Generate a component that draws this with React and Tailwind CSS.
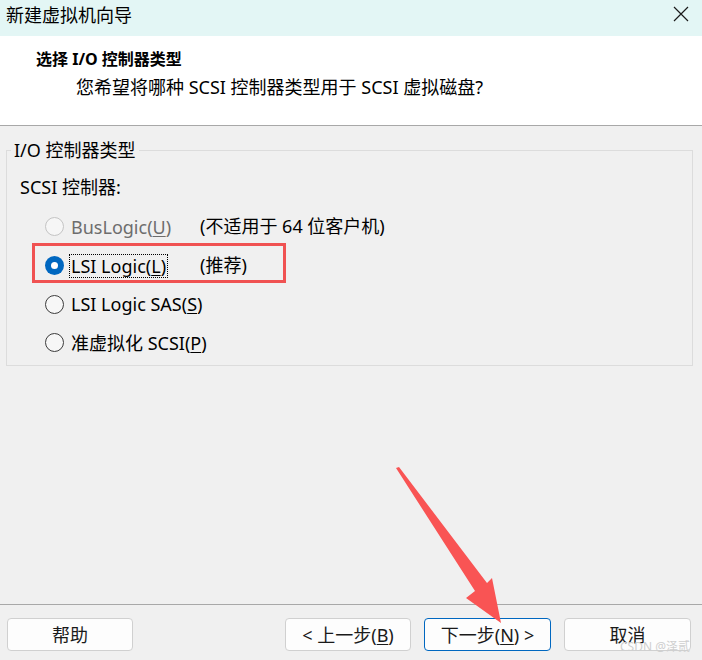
const font = { fontFamily: '"Noto Sans", "Noto Sans CJK SC", sans-serif' };

function Radio({ checked, disabled }) {
  if (checked) {
    return (
      <span className="w-[19px] h-[19px] rounded-full bg-[#0067c0] flex items-center justify-center shrink-0">
        <span className="w-[7px] h-[7px] rounded-full bg-white" />
      </span>
    );
  }
  return (
    <span
      className={
        "w-[19px] h-[19px] rounded-full border shrink-0 " +
        (disabled ? "border-[#c4c4c4] bg-[#f6f6f6]" : "border-[#3c3c3c] bg-[#f7f7f7]")
      }
    />
  );
}

function Option({ checked, disabled, label, hotkey, suffix, note, focused, h }) {
  return (
    <div className={"flex items-center whitespace-nowrap " + h}>
      <div className="w-[193px] shrink-0 flex items-center pl-[38px]">
        <Radio checked={checked} disabled={disabled} />
        <span
          className={
            "ml-[5px] px-[1px] leading-[22px] whitespace-nowrap " +
            (disabled ? "text-[#6d6d6d] " : "text-black ") +
            (focused ? "border border-dotted border-black" : "border border-transparent")
          }
        >
          {label}(<span className="underline underline-offset-2">{hotkey}</span>){suffix}
        </span>
      </div>
      {note && <span className="text-black">{note}</span>}
    </div>
  );
}

export default function App() {
  return (
    <div
      className="relative w-[702px] h-[660px] bg-[#f0f0f0] flex flex-col overflow-hidden text-[18px] text-[#1a1a1a]"
      style={font}
    >
      {/* title bar */}
      <div className="h-[36px] bg-[#e3f6f5] flex items-start justify-between pl-[6px] pt-[3px] shrink-0">
        <span className="leading-[24px] text-black">新建虚拟机向导</span>
        <svg className="mr-[13px] mt-[3px]" width="16" height="16" viewBox="0 0 16 16">
          <path d="M1 1 L15 15 M15 1 L1 15" stroke="#1a1a1a" strokeWidth="1.2" fill="none" />
        </svg>
      </div>

      {/* header */}
      <div className="h-[90px] bg-white border-b border-[#a8a8a8] shrink-0 pt-[11px]">
        <div className="pl-[36px] leading-[24px] text-[16px] font-bold text-black">选择 I/O 控制器类型</div>
        <div className="pl-[76px] mt-[4px] leading-[24px] text-black">
          您希望将哪种 SCSI 控制器类型用于 SCSI 虚拟磁盘?
        </div>
      </div>

      {/* body */}
      <div className="flex-1">
        <fieldset className="mt-[12px] ml-[6px] w-[687px] border border-[#dcdcdc] pb-[3px]">
          <legend className="ml-[4px] px-[3px] leading-[24px] text-black">I/O 控制器类型</legend>
          <div className="pl-[13px] mt-[13px] leading-[24px] text-black">SCSI 控制器:</div>
          <div className="mt-[8px] flex flex-col">
            <Option h="h-[39px]" disabled label="BusLogic" hotkey="U" note="(不适用于 64 位客户机)" />
            <Option h="h-[39px]" checked focused label="LSI Logic" hotkey="L" note="(推荐)" />
            <Option h="h-[38px]" label="LSI Logic SAS" hotkey="S" />
            <Option h="h-[39px]" label="准虚拟化 SCSI" hotkey="P" />
          </div>
        </fieldset>
      </div>

      {/* footer */}
      <div className="h-[56px] border-t border-[#a8a8a8] shrink-0 flex items-start pt-[13px] pl-[7px] pr-[11px]">
        <button className="w-[126px] h-[33px] bg-[#fdfdfd] border border-[#d0d0d0] rounded-[4px] leading-[24px]">帮助</button>
        <div className="flex-1" />
        <div className="flex gap-[13px]">
          <button className="w-[126px] h-[33px] bg-[#fdfdfd] border border-[#d0d0d0] rounded-[4px] leading-[24px]">
            &lt; 上一步(<span className="underline underline-offset-2">B</span>)
          </button>
          <button className="w-[127px] h-[33px] bg-[#fdfdfd] border border-[#0067c0] rounded-[4px] leading-[24px]">
            下一步(<span className="underline underline-offset-2">N</span>) &gt;
          </button>
          <button className="w-[127px] h-[33px] bg-[#fdfdfd] border border-[#d0d0d0] rounded-[4px] leading-[24px]">取消</button>
        </div>
      </div>

      {/* annotations */}
      <div className="absolute left-[32px] top-[243px] w-[254px] h-[40px] border-[3px] border-[#f05252] pointer-events-none" />
      <svg className="absolute left-0 top-0 pointer-events-none" width="702" height="660" viewBox="0 0 702 660">
        <polygon
          points="396,468 399,467 487,583 492,578 501,623 466,598 475,591"
          fill="#f95454"
        />
      </svg>
      <span className="absolute left-[620px] top-[640px] text-[12px] text-[#cfcfcf] leading-[14px]">
        CSDN @泽贰
      </span>
    </div>
  );
}
